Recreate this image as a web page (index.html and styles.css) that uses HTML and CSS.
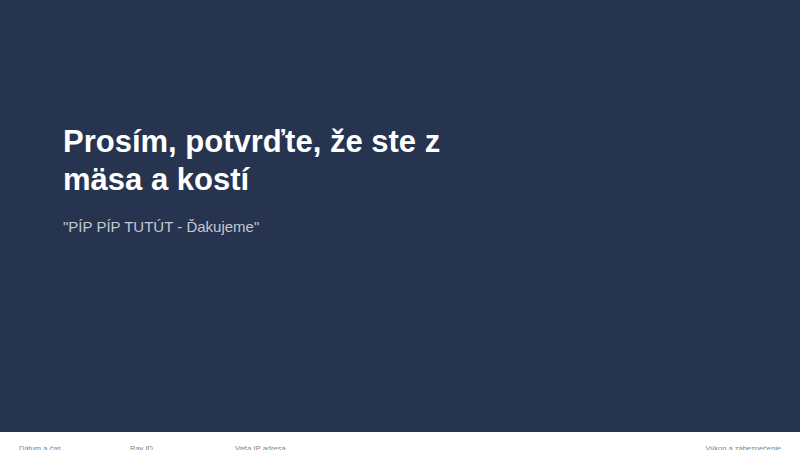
FILE: index.html
```html
<!DOCTYPE html>
<html lang="sk">
<head>
<meta charset="utf-8">
<link rel="stylesheet" href="styles.css">
</head>
<body>
<main class="hero">
  <div class="content">
    <h1 class="title">Prosím, potvrďte, že ste z mäsa a kostí</h1>
    <p class="subtitle">"PÍP PÍP TUTÚT - Ďakujeme"</p>
  </div>
</main>
<footer class="footer">
  <div class="meta">
    <span class="item item-date">Dátum a čas</span>
    <span class="item item-ray">Ray ID</span>
    <span class="item item-ip">Vaša IP adresa</span>
  </div>
  <span class="item">Výkon a zabezpečenie</span>
</footer>
</body>
</html>
```
FILE: styles.css
```css
html, body {
  margin: 0;
  padding: 0;
  height: 100%;
  overflow: hidden;
  font-family: "Liberation Sans", Arial, sans-serif;
}
.hero {
  height: 432px;
  background: #273450;
  box-sizing: border-box;
  padding: 123px 0 0 63px;
}
.title {
  margin: 0;
  max-width: 400px;
  font-size: 31px;
  line-height: 38px;
  font-weight: 700;
  color: #ffffff;
}
.subtitle {
  margin: 19px 0 0;
  font-size: 15px;
  line-height: 18px;
  color: #c3c8d2;
}
.footer {
  background: #ffffff;
  height: 18px;
  display: flex;
  justify-content: space-between;
  padding: 12px 19px 0 19px;
  box-sizing: border-box;
}
.meta {
  display: flex;
}
.item {
  font-size: 7.5px;
  line-height: 9px;
  color: #7a8294;
}
.item-date { width: 111px; }
.item-ray { width: 105px; }
```
